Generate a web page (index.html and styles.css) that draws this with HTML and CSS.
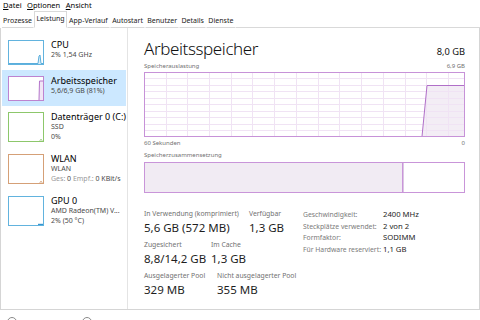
FILE: index.html
```html
<!DOCTYPE html>
<html lang="de">
<head>
<meta charset="utf-8">
<title>Task-Manager</title>
<link rel="stylesheet" href="styles.css">
</head>
<body>
<div class="menubar">
  <span><u>D</u>atei</span>
  <span><u>O</u>ptionen</span>
  <span><u>A</u>nsicht</span>
</div>
<div class="tabs">
  <span class="tab">Prozesse</span>
  <span class="tab active">Leistung</span>
  <span class="tab">App-Verlauf</span>
  <span class="tab">Autostart</span>
  <span class="tab">Benutzer</span>
  <span class="tab">Details</span>
  <span class="tab">Dienste</span>
  <span class="tabfill"></span>
</div>
<div class="panel">
  <div class="sidebar">
    <div class="item">
      <div class="thumb cpu">
        <svg class="spark" viewBox="0 0 34 23" preserveAspectRatio="none"><polygon class="cpu-fill" points="29,23 30,15 31,14 32,23"/><polyline class="cpu-line" points="0,22.5 29,22.5 30,15 31,14 32,22.5 34,22.5"/></svg>
      </div>
      <div class="info">
        <div class="name">CPU</div>
        <div class="sub">2% 1,54 GHz</div>
      </div>
    </div>
    <div class="item sel">
      <div class="thumb mem">
        <svg class="spark" viewBox="0 0 34 23" preserveAspectRatio="none"><polygon class="mem-fill" points="30,23 30.5,4 34,4 34,23"/><polyline class="mem-line" points="30,23 30.5,4 34,4"/></svg>
      </div>
      <div class="info">
        <div class="name">Arbeitsspeicher</div>
        <div class="sub">5,6/6,9 GB (81%)</div>
      </div>
    </div>
    <div class="item tall">
      <div class="thumb disk">
        <svg class="spark" viewBox="0 0 34 28" preserveAspectRatio="none"><polyline class="disk-line" points="31,27.5 32,26.5 33,27.5"/></svg>
      </div>
      <div class="info">
        <div class="name">Datenträger 0 (C:)</div>
        <div class="sub">SSD</div>
        <div class="sub">0%</div>
      </div>
    </div>
    <div class="item tall">
      <div class="thumb net">
        <svg class="spark" viewBox="0 0 34 28" preserveAspectRatio="none"><polyline class="net-line" points="31,27.5 32,26.5 33,27.5"/></svg>
      </div>
      <div class="info">
        <div class="name">WLAN</div>
        <div class="sub">WLAN</div>
        <div class="sub"><span class="dim">Ges:</span> 0 <span class="dim">Empf.:</span> 0 KBit/s</div>
      </div>
    </div>
    <div class="item tall">
      <div class="thumb gpu">
        <svg class="spark" viewBox="0 0 34 28" preserveAspectRatio="none"><polyline class="gpu-line" points="29,27.5 34,27.5"/></svg>
      </div>
      <div class="info">
        <div class="name">GPU 0</div>
        <div class="sub">AMD Radeon(TM) V...</div>
        <div class="sub">2% (50 °C)</div>
      </div>
    </div>
  </div>
  <div class="main">
    <div class="head">
      <span class="title">Arbeitsspeicher</span>
      <span class="total">8,0 GB</span>
    </div>
    <div class="caption top"><span>Speicherauslastung</span><span>6,9 GB</span></div>
    <svg class="chart" width="321" height="65" viewBox="0 0 321 65">
      <polygon class="area" points="278,64.5 283,13.5 320.5,13.5 320.5,64.5"/>
      <path class="grid" d="M22.5 0V65M43.5 0V65M65.5 0V65M87.5 0V65M108.5 0V65M130.5 0V65M152.5 0V65M174.5 0V65M195.5 0V65M217.5 0V65M239.5 0V65M261.5 0V65M282.5 0V65M304.5 0V65M0 6.5H321M0 13.5H321M0 19.5H321M0 26.5H321M0 32.5H321M0 39.5H321M0 45.5H321M0 52.5H321M0 58.5H321"/>
      <polyline class="line" points="278,64.5 283,13.5 320.5,13.5"/>
      <rect class="frame" x="0.5" y="0.5" width="320" height="64"/>
    </svg>
    <div class="caption axis"><span>60 Sekunden</span><span>0</span></div>
    <div class="caption comp-cap"><span>Speicherzusammensetzung</span></div>
    <div class="comp">
      <div class="inuse" style="width:258px"></div>
      <div class="modified" style="width:1px"></div>
    </div>
    <div class="stats">
      <div class="left">
        <div class="srow">
          <div class="stat w1"><div class="lbl">In Verwendung (komprimiert)</div><div class="val">5,6 GB (572 MB)</div></div>
          <div class="stat"><div class="lbl">Verfügbar</div><div class="val">1,3 GB</div></div>
        </div>
        <div class="srow">
          <div class="stat w2"><div class="lbl">Zugesichert</div><div class="val">8,8/14,2 GB</div></div>
          <div class="stat"><div class="lbl">Im Cache</div><div class="val">1,3 GB</div></div>
        </div>
        <div class="srow">
          <div class="stat w3"><div class="lbl">Ausgelagerter Pool</div><div class="val">329 MB</div></div>
          <div class="stat"><div class="lbl">Nicht ausgelagerter Pool</div><div class="val">355 MB</div></div>
        </div>
      </div>
      <div class="right">
        <div class="kv"><span class="k">Geschwindigkeit:</span><span class="v">2400 MHz</span></div>
        <div class="kv"><span class="k">Steckplätze verwendet:</span><span class="v">2 von 2</span></div>
        <div class="kv"><span class="k">Formfaktor:</span><span class="v">SODIMM</span></div>
        <div class="kv"><span class="k">Für Hardware reserviert:</span><span class="v">1,1 GB</span></div>
      </div>
    </div>
  </div>
</div>
<div class="footer">
  <span class="circ"></span>
  <span class="circ"></span>
</div>
</body>
</html>
```
FILE: styles.css
```css
* { box-sizing: border-box; }
html, body { margin: 0; padding: 0; }
body {
  width: 480px;
  height: 320px;
  overflow: hidden;
  background: #fff;
  color: #000;
  font-family: "Noto Sans", "Open Sans", sans-serif;
}

/* menu */
.menubar {
  display: flex;
  gap: 5.5px;
  height: 11px;
  padding-left: 3px;
  font-size: 7.5px;
  line-height: 11px;
}
.menubar u { text-decoration-thickness: 0.5px; text-underline-offset: 1px; }

/* tabs */
.tabs {
  display: flex;
  align-items: flex-end;
  height: 17px;
  padding-left: 1.8px;
}
.tab {
  height: 16px;
  padding: 0 1.2px;
  font-size: 7px;
  line-height: 15px;
  color: #1a1a1a;
  border: 1px solid transparent;
  border-bottom: 1px solid #d9d9d9;
}
.tab.active {
  height: 17px;
  line-height: 14px;
  background: #fff;
  border-color: #d9d9d9;
  border-bottom-color: #fff;
}
.tabfill {
  flex: 1;
  height: 1px;
  background: #d9d9d9;
}
.tabs > .tab:first-child { border-left: none; }

/* panel */
.panel {
  display: flex;
  height: 282px;
  border: 1px solid #d5d5d5;
  border-top: none;
}

.sidebar {
  width: 127px;
  flex: none;
  padding: 6px 1px 0;
  border-right: 1px solid #e4e4e4;
}
.item {
  display: flex;
  gap: 7px;
  height: 36px;
  padding: 6px 0 0 6px;
}
.item.tall { height: 42px; }
.item.sel { background: #cce8ff; }

.thumb {
  flex: none;
  width: 36px;
  height: 25px;
  border: 1px solid;
  background: #fff;
}
.item.tall .thumb { height: 30px; }
.thumb.cpu { border-color: #62b3de; }
.thumb.mem { border-color: #bd83d0; }
.thumb.disk { border-color: #8dc76b; }
.thumb.net { border-color: #d5a077; }
.thumb.gpu { border-color: #62b3de; }
.spark { display: block; width: 100%; height: 100%; }
.cpu-fill { fill: #d7ecf8; }
.cpu-line { fill: none; stroke: #5aaedc; stroke-width: 1; }
.mem-fill { fill: #f1e6f5; }
.mem-line { fill: none; stroke: #b474ca; stroke-width: 1; }
.disk-line { fill: none; stroke: #5aa42c; stroke-width: 1; }
.net-line { fill: none; stroke: #b9692a; stroke-width: 1; }
.gpu-line { fill: none; stroke: #3596d0; stroke-width: 1.4; }

.info { margin-top: -1px; min-width: 0; }
.name {
  font-size: 9px;
  line-height: 11px;
  white-space: nowrap;
}
.sub {
  font-size: 7px;
  line-height: 10px;
  color: #4a4a4a;
  white-space: nowrap;
}
.sub .dim { color: #9a9a9a; }

/* main */
.main {
  flex: 1;
  padding: 11px 14px 0 16px;
}
.head {
  display: flex;
  justify-content: space-between;
  align-items: baseline;
  height: 20px;
}
.title {
  font-size: 17px;
  font-weight: 300;
  letter-spacing: -0.4px;
  line-height: 20px;
  color: #111;
}
.total {
  font-size: 9.3px;
  color: #111;
}
.caption {
  display: flex;
  justify-content: space-between;
  font-size: 6px;
  line-height: 8px;
  color: #707070;
}
.caption.top { margin-top: 3px; }
.chart { display: block; margin-top: 2px; }
.caption.axis { margin-top: 2px; }
.caption.comp-cap { margin-top: 4px; }

.area { fill: #f3edf5; }
.grid { fill: none; stroke: #f0e3f4; stroke-width: 1; }
.line { fill: none; stroke: #b06fc8; stroke-width: 1; }
.frame { fill: none; stroke: #c792d8; stroke-width: 1; }

.comp {
  display: flex;
  height: 31px;
  margin-top: 3px;
  border: 1px solid #c995d9;
}
.inuse {
  background: #f1ebf3;
  border-right: 1px solid #c995d9;
}
.modified { background: #dcc6e4; }

/* stats */
.stats {
  display: flex;
  margin-top: 16px;
}
.left { width: 159px; flex: none; }
.srow {
  display: flex;
  margin-bottom: 5px;
}
.w1 { width: 105px; }
.w2 { width: 67px; }
.w3 { width: 73px; }
.lbl {
  font-size: 6.8px;
  line-height: 10px;
  color: #707070;
  white-space: nowrap;
}
.val {
  margin-top: 1px;
  font-size: 11.5px;
  line-height: 15px;
  color: #1e1e1e;
  white-space: nowrap;
}
.right { padding-top: 0; }
.kv {
  display: flex;
  align-items: baseline;
  line-height: 11.5px;
  white-space: nowrap;
}
.k {
  width: 80px;
  font-size: 6.8px;
  color: #7a7a7a;
}
.v {
  font-size: 7.7px;
  color: #1e1e1e;
}

/* footer */
.footer {
  display: flex;
  gap: 65px;
  padding: 7px 0 0 7px;
}
.circ {
  width: 10px;
  height: 10px;
  border: 1px solid #8a8a8a;
  border-radius: 50%;
}
```
